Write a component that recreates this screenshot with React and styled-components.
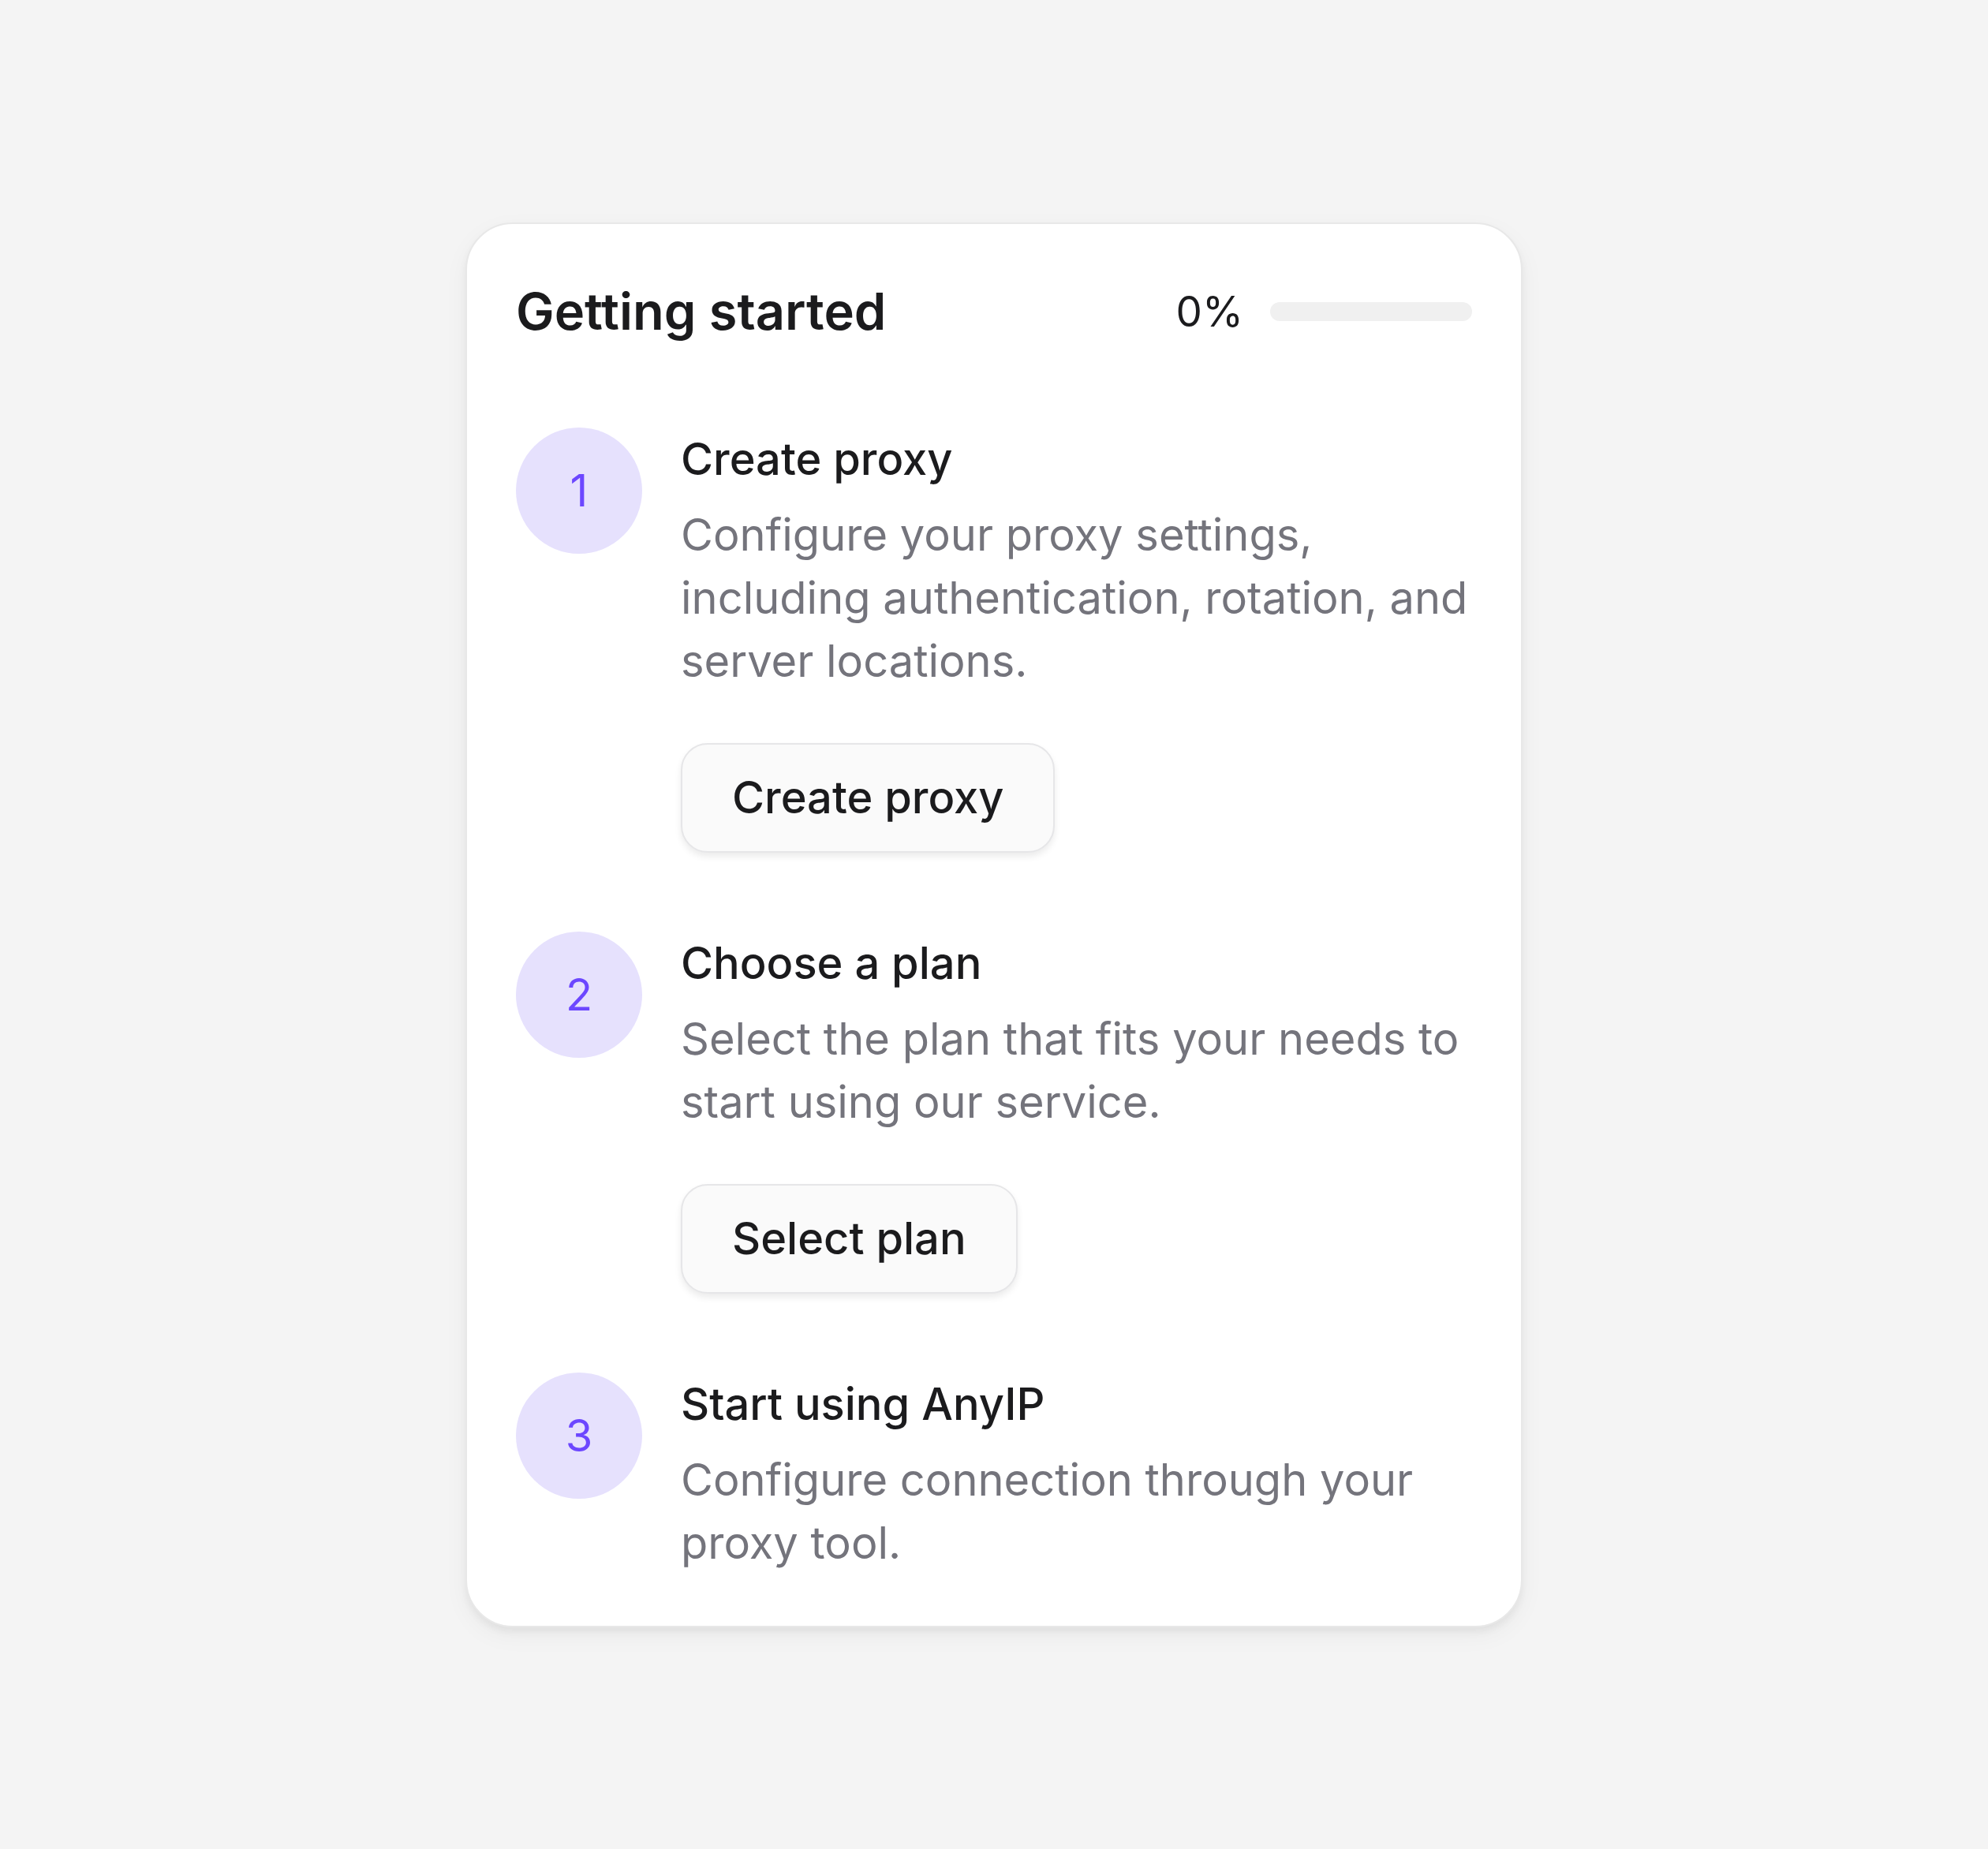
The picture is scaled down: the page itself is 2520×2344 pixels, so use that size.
import React from 'react'
import styled, { createGlobalStyle } from 'styled-components'

const GlobalStyle = createGlobalStyle`
  html, body {
    margin: 0;
    padding: 0;
    background: #f4f4f4;
    font-family: Inter, "Noto Sans", sans-serif;
    -webkit-font-smoothing: antialiased;
  }
`

const Page = styled.div`
  min-height: 100vh;
  display: flex;
  align-items: center;
  justify-content: center;
`

const Card = styled.div`
  width: 1340px;
  box-sizing: border-box;
  background: #ffffff;
  border: 2px solid #e8e8e8;
  border-radius: 60px;
  padding: 64px 62px 65px;
  box-shadow: 0 6px 10px rgba(0, 0, 0, 0.05), 0 10px 32px rgba(0, 0, 0, 0.045);
  display: flex;
  flex-direction: column;
  gap: 100px;
`

const Header = styled.div`
  display: flex;
  align-items: center;
  justify-content: space-between;
  height: 94px;
`

const Title = styled.h1`
  margin: 0;
  font-size: 65px;
  font-weight: 600;
  color: #1b1b1d;
`

const Progress = styled.div`
  display: flex;
  align-items: center;
  gap: 34px;
`

const Percent = styled.span`
  font-size: 53px;
  font-weight: 400;
  color: #1b1b1d;
`

const Track = styled.div`
  width: 256px;
  height: 24px;
  border-radius: 12px;
  background: #f0f0f0;
  overflow: hidden;
`

const Fill = styled.div`
  height: 100%;
  background: #6c47ff;
  border-radius: 12px;
`

const Steps = styled.div`
  display: flex;
  flex-direction: column;
  gap: 100px;
`

const Step = styled.div`
  display: flex;
  align-items: flex-start;
  gap: 49px;
`

const Badge = styled.div`
  flex: none;
  width: 160px;
  height: 160px;
  border-radius: 50%;
  background: #e6e1fd;
  color: #6c47ff;
  font-size: 56px;
  display: flex;
  align-items: center;
  justify-content: center;
`

const Body = styled.div`
  flex: 1;
  display: flex;
  flex-direction: column;
  align-items: flex-start;
`

const StepTitle = styled.div`
  font-size: 56px;
  font-weight: 500;
  line-height: 80px;
  color: #1b1b1d;
`

const StepText = styled.p`
  margin: 16px 0 0;
  font-size: 56px;
  line-height: 80px;
  color: #74747c;
`

const Button = styled.button`
  margin-top: 64px;
  height: 139px;
  padding: 0 63px;
  border: 2px solid #e6e6e8;
  border-radius: 34px;
  background: #fafafa;
  font-family: inherit;
  font-size: 56px;
  font-weight: 500;
  color: #1b1b1d;
  box-shadow: 0 5px 8px rgba(0, 0, 0, 0.08);
  cursor: pointer;
`

const steps = [
  {
    title: 'Create proxy',
    text: 'Configure your proxy settings, including authentication, rotation, and server locations.',
    action: 'Create proxy',
  },
  {
    title: 'Choose a plan',
    text: 'Select the plan that fits your needs to start using our service.',
    action: 'Select plan',
  },
  {
    title: 'Start using AnyIP',
    text: 'Configure connection through your proxy tool.',
  },
]

const App = () => {
  const progress = 0
  return (
    <Page>
      <GlobalStyle />
      <Card>
        <Header>
          <Title>Getting started</Title>
          <Progress>
            <Percent>{progress}%</Percent>
            <Track>
              <Fill style={{ width: `${progress}%` }} />
            </Track>
          </Progress>
        </Header>
        <Steps>
          {steps.map((s, i) => (
            <Step key={s.title}>
              <Badge>{i + 1}</Badge>
              <Body>
                <StepTitle>{s.title}</StepTitle>
                <StepText>{s.text}</StepText>
                {s.action && <Button>{s.action}</Button>}
              </Body>
            </Step>
          ))}
        </Steps>
      </Card>
    </Page>
  )
}

export default App
